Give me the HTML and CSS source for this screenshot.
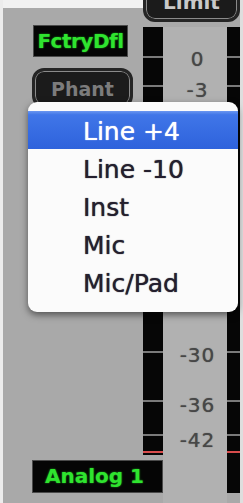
FILE: index.html
```html
<!DOCTYPE html>
<html lang="en">
<head>
    <meta charset="UTF-8">
    <meta name="viewport" content="width=device-width, initial-scale=1.0">
    <title>Analog 1 - Input</title>
    <link rel="stylesheet" href="styles.css">
</head>
<body>
    <div class="strip">
        <div class="controls">
            <div class="lcd preset">FctryDfl</div>
            <div class="pill phant"><span>Phant</span></div>
        </div>

        <div class="pill limit"><span>Limit</span></div>

        <!-- left meter -->
        <div class="meter">
            <div class="tick" style="top: 29px"></div>
            <div class="tick" style="top: 58px"></div>
            <div class="tick" style="top: 324px"></div>
            <div class="tick" style="top: 373px"></div>
            <div class="tick" style="top: 407px"></div>
            <div class="peak" style="top: 424px"></div>
        </div>

        <div class="scale">
            <div class="mark" style="top: 22px">0</div>
            <div class="mark" style="top: 53px">-3</div>
            <div class="mark" style="top: 318px">-30</div>
            <div class="mark" style="top: 368px">-36</div>
            <div class="mark" style="top: 403px">-42</div>
        </div>

        <!-- right meter -->
        <div class="meter right">
            <div class="tick" style="top: 29px"></div>
            <div class="tick" style="top: 58px"></div>
            <div class="tick" style="top: 324px"></div>
            <div class="tick" style="top: 373px"></div>
            <div class="tick" style="top: 407px"></div>
            <div class="peak" style="top: 424px"></div>
        </div>

        <div class="lcd channel">Analog 1</div>

        <!-- input type popup -->
        <ul class="menu">
            <li class="selected">Line +4</li>
            <li>Line -10</li>
            <li>Inst</li>
            <li>Mic</li>
            <li>Mic/Pad</li>
        </ul>
    </div>
</body>
</html>
```

FILE: styles.css
```css
body {
    margin: 0;
    width: 243px;
    height: 503px;
    overflow: hidden;
    background: #aaaaaa;
    font-family: 'DejaVu Sans', sans-serif;
}

.strip {
    position: relative;
    display: grid;
    grid-template-columns: 140px 20px 64px 13px;
    grid-template-rows: 27px 428px 48px;
    width: 237px;
    height: 503px;
    background: #a9a9a9;
    border-left: 3px solid #ececec;
    border-right: 3px solid #dedede;
}

.controls {
    grid-column: 1;
    grid-row: 1 / 3;
    border-top: 8px solid #f1f1f1;
    padding-top: 17px;
}

.lcd {
    box-sizing: border-box;
    background: #050505;
    border: 1px solid #4a4a4a;
    color: #2fe42f;
    font-weight: bold;
    font-size: 20px;
    text-shadow: 0 0 2px #1c9a1c;
}

.preset {
    width: 95px;
    height: 32px;
    margin-left: 30px;
    line-height: 30px;
    text-align: center;
    letter-spacing: -0.5px;
}

.pill {
    box-sizing: border-box;
    border: 3px solid #252525;
    border-radius: 12px;
    background: #1b1b1b;
    box-shadow: inset 0 0 0 1px #8a8a8a;
    font-weight: bold;
    text-align: center;
}

.phant {
    width: 101px;
    height: 40px;
    margin: 11px 0 0 29px;
    color: #7c7c7c;
    font-size: 19px;
    line-height: 36px;
}

.limit {
    grid-column: 2 / 5;
    grid-row: 1;
    align-self: start;
    height: 38px;
    margin-top: -16px;
    color: #c9c9c9;
    font-size: 20px;
    line-height: 30px;
}

.meter {
    grid-column: 2;
    grid-row: 2;
    position: relative;
    background: #060606;
}

.meter.right {
    grid-column: 4;
    grid-row: 2 / 4;
    margin-bottom: 10px;
}

.tick {
    position: absolute;
    left: 0;
    right: 0;
    height: 2px;
    background: #7a7a7a;
}

.peak {
    position: absolute;
    left: 0;
    right: 0;
    height: 2px;
    background: #d84c4c;
}

.scale {
    grid-column: 3;
    grid-row: 2 / 4;
    position: relative;
    background: #b1b1b1;
}

.mark {
    position: absolute;
    left: 5px;
    right: 0;
    text-align: center;
    font-size: 20px;
    line-height: 20px;
    letter-spacing: 1px;
    color: #474747;
    text-shadow: 0 0 1px #555555;
}

.channel {
    grid-column: 1 / 3;
    grid-row: 3;
    height: 33px;
    margin: 5px 0 10px 29px;
    padding-left: 12px;
    line-height: 31px;
}

.menu {
    position: absolute;
    left: 25px;
    top: 102px;
    box-sizing: border-box;
    width: 210px;
    height: 210px;
    margin: 0;
    padding: 9px 0 11px;
    list-style: none;
    background: #fbfbfb;
    border-radius: 9px;
    box-shadow: 0 3px 7px rgba(0, 0, 0, 0.5);
}

.menu li {
    height: 38px;
    box-sizing: border-box;
    padding: 4px 0 0 55px;
    font-size: 25px;
    line-height: 34px;
    color: #241f2e;
    text-shadow: 0 0 1px #241f2e;
}

.menu li.selected {
    background: linear-gradient(#6a96f0 0, #4076e8 10%, #2e62dc 100%);
    color: #ffffff;
    text-shadow: 0 0 1px #ffffff;
}
```
